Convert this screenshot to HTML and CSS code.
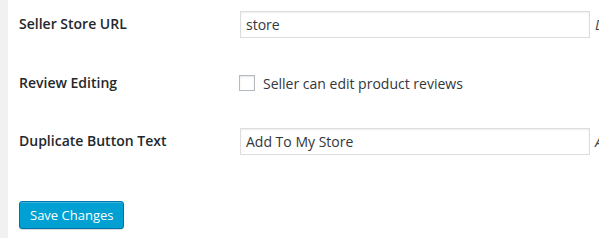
FILE: index.html
```html
<!DOCTYPE html>
<html lang="en">
<head>
<meta charset="utf-8">
<title>Settings</title>
<link rel="stylesheet" href="styles.css">
</head>
<body>
<div class="admin">
  <div class="strip"></div>
  <div class="panel">
    <form class="settings">
      <div class="row first">
        <div class="label">Seller Store URL</div>
        <div class="field">
          <input class="text-input" type="text" value="store">
          <span class="description">Define the seller store URL (http://example.com/[this-text]/[seller-name])</span>
        </div>
      </div>
      <div class="row">
        <div class="label">Review Editing</div>
        <div class="field check-field">
          <label class="check-label"><span class="checkbox"></span>Seller can edit product reviews</label>
        </div>
      </div>
      <div class="row">
        <div class="label">Duplicate Button Text</div>
        <div class="field">
          <input class="text-input" type="text" value="Add To My Store">
          <span class="description">Add to store button text on single product page</span>
        </div>
      </div>
      <div class="actions">
        <button type="button" class="button-primary">Save Changes</button>
      </div>
    </form>
  </div>
</div>
</body>
</html>
```

FILE: styles.css
```css
html, body {
  margin: 0;
  padding: 0;
  overflow: hidden;
  background: #ffffff;
}

body {
  font-family: "Open Sans", "Liberation Sans", sans-serif;
  font-size: 14px;
  color: #444444;
}

.admin {
  display: flex;
  width: 599px;
  height: 238px;
}

.strip {
  width: 8px;
  flex: none;
  background: #f1f1f1;
}

.panel {
  flex: 1;
  min-width: 0;
  background: #ffffff;
  padding-left: 11px;
}

.row {
  display: grid;
  grid-template-columns: 221px 1fr;
  align-items: center;
  padding: 15px 0;
}

.row.first {
  padding-top: 11px;
}

.label {
  font-weight: 600;
  color: #23282d;
  line-height: 1.3;
}

.field {
  display: flex;
  align-items: center;
  gap: 5px;
  white-space: nowrap;
}

.text-input {
  box-sizing: border-box;
  width: 350px;
  height: 27px;
  flex: none;
  margin: 0;
  padding: 0 5px;
  border: 1px solid #dddddd;
  border-radius: 0;
  box-shadow: inset 0 1px 2px rgba(0, 0, 0, 0.07);
  font-family: "Open Sans", "Liberation Sans", sans-serif;
  font-size: 14px;
  color: #32373c;
  background: #ffffff;
  outline: none;
}

.description {
  font-style: italic;
  color: #444444;
  font-size: 14px;
}

.check-field {
  height: 30px;
}

.check-label {
  display: flex;
  align-items: center;
  color: #32373c;
}

.checkbox {
  box-sizing: border-box;
  width: 16px;
  height: 16px;
  margin-left: -1px;
  margin-right: 8px;
  border: 1px solid #b4b9be;
  background: #ffffff;
  box-shadow: inset 0 1px 2px rgba(0, 0, 0, 0.1);
}

.actions {
  padding-top: 31px;
}

.button-primary {
  box-sizing: border-box;
  height: 28px;
  padding: 0 10px 1px;
  margin: 0;
  border: 1px solid #0073aa;
  border-radius: 3px;
  background: #00a0d2;
  box-shadow: inset 0 1px 0 rgba(120, 200, 230, 0.5), 0 1px 0 rgba(0, 0, 0, 0.15);
  color: #ffffff;
  font-family: "Open Sans", "Liberation Sans", sans-serif;
  font-size: 13px;
  line-height: 26px;
  cursor: pointer;
}
```
